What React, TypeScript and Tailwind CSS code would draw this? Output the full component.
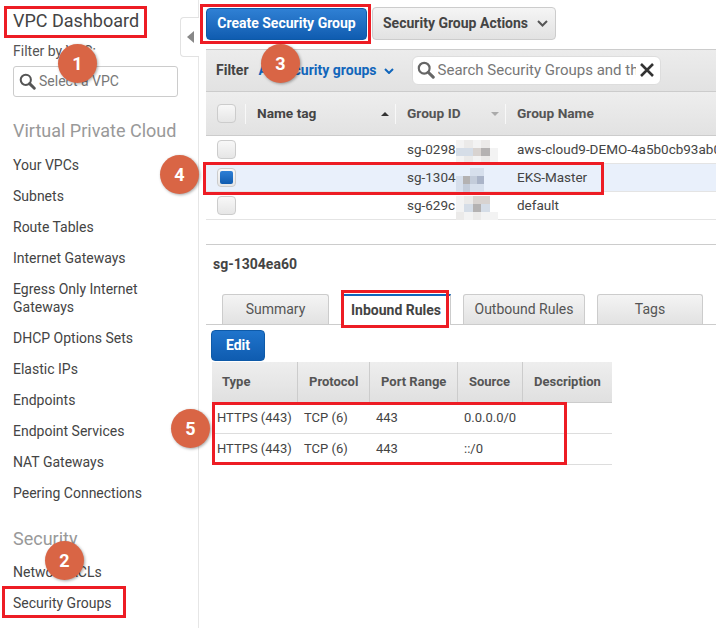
import React from "react";

const navA = ["Your VPCs", "Subnets", "Route Tables", "Internet Gateways"];
const navB = ["DHCP Options Sets", "Elastic IPs", "Endpoints", "Endpoint Services", "NAT Gateways", "Peering Connections"];

function Nav({ children, className = "" }: { children: React.ReactNode; className?: string }) {
  return <div className={"text-[14px] leading-[18px] text-[#444] mb-[13px] whitespace-nowrap " + className}>{children}</div>;
}

function Search({ size, color }: { size: number; color: string }) {
  return (
    <svg width={size} height={size} viewBox="0 0 20 20" fill="none" stroke={color} className="shrink-0">
      <circle cx="8" cy="8" r="6" strokeWidth="2.4" />
      <path d="M12.5 12.5L18 18" strokeWidth="3.4" strokeLinecap="round" />
    </svg>
  );
}

function Check({ checked = false }: { checked?: boolean }) {
  return (
    <div className="w-[19px] h-[19px] rounded-[4px] border border-[#ccc] bg-gradient-to-b from-[#f8f8f8] to-[#e6e6e6] flex items-center justify-center">
      {checked && <div className="w-[13px] h-[13px] rounded-[2px] bg-gradient-to-b from-[#2d7fd6] to-[#0f5cb0]" />}
    </div>
  );
}

function Badge({ n, className }: { n: number; className: string }) {
  return (
    <div className={"absolute w-[39px] h-[39px] rounded-full bg-[#d96545] text-white text-[18px] font-bold flex items-center justify-center shadow-[1px_1px_3px_rgba(0,0,0,0.35)] " + className}>
      {n}
    </div>
  );
}

function RedBox({ className }: { className: string }) {
  return <div className={"absolute border-[3px] border-[#ed1c24] pointer-events-none " + className} />;
}

function Mosaic({ className, cols, rows, cells }: { className: string; cols: number; rows: number; cells: string[] }) {
  return (
    <div
      className={"absolute grid " + className}
      style={{ gridTemplateColumns: `repeat(${cols}, 1fr)`, gridTemplateRows: `repeat(${rows}, 1fr)` }}
    >
      {cells.map((c, i) => (
        <div key={i} style={{ background: c }} />
      ))}
    </div>
  );
}

const W = "#ffffff";
const A = "#f3f3f3";
const B = "#ebeae9";
const C = "#d5dde7";
const D = "#d8d3d0";
const E = "#b4b2b2";
const F = "#c3ccda";
const G = "#aab4c8";
const H = "#d6dfec";
const I = "#e9f0fb";

const mosaics: Record<string, { cls: string; cols: number; rows: number; cells: string[] }> = {
  a: {
    cls: "left-[60px] top-[4px] w-[42px] h-[24px]",
    cols: 5,
    rows: 3,
    cells: [A, B, A, B, W, C, C, D, E, A, A, B, A, B, A],
  },
  b: {
    cls: "left-[60px] top-[4px] w-[28px] h-[24px]",
    cols: 4,
    rows: 3,
    cells: [I, I, H, H, H, E, F, G, H, F, H, H],
  },
  c: {
    cls: "left-[60px] top-[4px] w-[42px] h-[24px]",
    cols: 5,
    rows: 3,
    cells: [A, B, D, D, W, A, C, E, C, W, B, A, B, A, A],
  },
};

function SgRow({ selected, id, name, mosaic, checked }: { selected?: boolean; id: string; name: string; mosaic: string; checked?: boolean }) {
  const m = mosaics[mosaic];
  return (
    <div className={"grid grid-cols-[40px_150px_110px_1fr] h-[28px] items-center border-b border-[#e4e4e4] text-[13.5px] text-[#444] whitespace-nowrap " + (selected ? "bg-[#e9f0fb]" : "bg-white")}>
      <div className="pl-[11px]"><Check checked={checked} /></div>
      <div />
      <div className="pl-[11px] relative h-full flex items-center">
        {id}
        <Mosaic className={m.cls} cols={m.cols} rows={m.rows} cells={m.cells} />
      </div>
      <div className="pl-[11px] min-w-0 overflow-hidden">{name}</div>
    </div>
  );
}

function Th({ w, children }: { w: string; children: React.ReactNode }) {
  return <div className={"h-full flex items-center border-r border-[#ccc] last:border-r-0 " + w}>{children}</div>;
}

function RuleRow({ source }: { source: string }) {
  return (
    <div className="flex h-[31px] items-center border-b border-[#ddd] text-[13px] text-[#444] whitespace-nowrap">
      <div className="w-[86px] pl-[5px]">HTTPS (443)</div>
      <div className="w-[72px] pl-[6px]">TCP (6)</div>
      <div className="w-[88px] pl-[6px]">443</div>
      <div className="w-[65px] pl-[6px]">{source}</div>
      <div className="flex-1" />
    </div>
  );
}

function Tab({ w, active, children }: { w: string; active?: boolean; children: React.ReactNode }) {
  return active ? (
    <div className={"h-[31px] -mb-px flex items-center justify-center bg-white border-x border-[#ccc] border-t-2 border-t-[#1166bb] text-[14px] font-bold text-[#444] " + w}>{children}</div>
  ) : (
    <div className={"h-[30px] flex items-center justify-center rounded-t-[3px] border border-[#ccc] border-b-0 bg-gradient-to-b from-[#f4f4f4] to-[#e2e2e2] text-[14px] text-[#555] " + w}>{children}</div>
  );
}

export default function App() {
  return (
    <div className="relative w-[716px] h-[628px] overflow-hidden bg-white flex font-['Roboto',sans-serif]">
      <aside className="w-[199px] h-full shrink-0 border-r border-[#e6e6e6] pl-[13px] pr-[20px] pt-[9px] relative">
        <div className="text-[18px] leading-[24px] text-[#444]">VPC Dashboard</div>
        <div className="text-[14px] leading-[18px] text-[#555] mt-[9px]">Filter by VPC:</div>
        <div className="mt-[6px] h-[31px] w-[165px] rounded-[3px] border border-[#ccc] flex items-center pl-[5px] gap-[3px] text-[14px] text-[#777] whitespace-nowrap">
          <Search size={17} color="#555" />
          <span>Select a VPC</span>
        </div>
        <div className="text-[18px] leading-[24px] text-[#999] mt-[22px] mb-[13px] whitespace-nowrap">Virtual Private Cloud</div>
        {navA.map((t) => <Nav key={t}>{t}</Nav>)}
        <Nav>Egress Only Internet<br />Gateways</Nav>
        {navB.map((t) => <Nav key={t}>{t}</Nav>)}
        <div className="text-[18px] leading-[24px] text-[#999] mt-[25px] mb-[12px]">Security</div>
        <Nav>Network ACLs</Nav>
        <Nav>Security Groups</Nav>
        <div className="absolute left-[180px] top-[17px] w-[19px] h-[40px] bg-white border border-r-0 border-[#e2e2e2] rounded-l-[4px] flex items-center justify-center">
          <div className="w-0 h-0 border-y-[6px] border-y-transparent border-r-[7px] border-r-[#888]" />
        </div>
      </aside>

      <main className="flex-1 min-w-0 pl-[7px] pt-[7px]">
        <div className="flex items-center gap-[5px] h-[33px]">
          <div className="w-[161px] h-[32px] rounded-[4px] bg-gradient-to-b from-[#2f80d4] to-[#0f5cb0] border border-[#0e5aa8] text-white text-[14px] font-bold flex items-center justify-center whitespace-nowrap">Create Security Group</div>
          <div className="w-[184px] h-[33px] rounded-[4px] border border-[#ccc] bg-gradient-to-b from-[#f5f5f5] to-[#e2e2e2] text-[14px] font-bold text-[#444] flex items-center pl-[10px] gap-[9px] whitespace-nowrap">
            Security Group Actions
            <svg width="11" height="7" viewBox="0 0 11 7" fill="none" stroke="#555" strokeWidth="2"><path d="M1 1l4.5 4.5L10 1" /></svg>
          </div>
        </div>

        <div className="mt-[9px] h-[43px] bg-gradient-to-b from-[#ececec] to-[#e2e2e2] border-y border-[#ccc] flex items-center pl-[10px] text-[14px] font-bold whitespace-nowrap">
          <span className="text-[#444]">Filter</span>
          <span className="ml-[10px] text-[#1166bb] flex items-center gap-[7px]">
            All security groups
            <svg width="10" height="6" viewBox="0 0 10 6" fill="none" stroke="#1166bb" strokeWidth="2"><path d="M1 1l4 4 4-4" /></svg>
          </span>
          <div className="ml-[18px] -mt-px w-[249px] h-[29px] shrink-0 rounded-[6px] border border-[#ddd] bg-white flex items-center pl-[1px] font-normal text-[15px] text-[#777] overflow-hidden">
            <div className="w-[24px] flex justify-center"><Search size={18} color="#666" /></div>
            <span className="w-[198px] overflow-hidden">Search Security Groups and their</span>
            <svg className="ml-[4px] shrink-0" width="14" height="14" viewBox="0 0 14 14" stroke="#333" strokeWidth="2.6"><path d="M1 1l12 12M13 1L1 13" /></svg>
          </div>
        </div>

        <div className="grid grid-cols-[40px_150px_110px_1fr] h-[44px] items-center bg-gradient-to-b from-[#eeeeee] to-[#e2e2e2] border-b border-[#ccc] text-[13.7px] font-bold text-[#555] whitespace-nowrap">
          <div className="pl-[11px] h-[20px] flex items-center border-r border-[#f8f8f8]"><Check /></div>
          <div className="pl-[11px] pr-[4px] h-[20px] flex items-center justify-between border-r border-[#f8f8f8] text-[#444]">
            Name tag
            <div className="w-0 h-0 border-x-[4px] border-x-transparent border-b-[4px] border-b-[#333] mr-[2px]" />
          </div>
          <div className="pl-[11px] pr-[6px] h-[20px] flex items-center justify-between border-r border-[#f8f8f8]">
            Group ID
            <div className="w-0 h-0 border-x-[4px] border-x-transparent border-t-[4px] border-t-[#aaa]" />
          </div>
          <div className="pl-[11px]">Group Name</div>
        </div>

        <SgRow id="sg-0298" name="aws-cloud9-DEMO-4a5b0cb93ab0" mosaic="a" />
        <SgRow id="sg-1304" name="EKS-Master" mosaic="b" selected checked />
        <SgRow id="sg-629c" name="default" mosaic="c" />

        <div className="mt-[24px] border-t border-[#ccc] h-[1px]" />
        <div className="mt-[11px] pl-[7px] text-[14px] leading-[16px] font-bold text-[#444]">sg-1304ea60</div>

        <div className="mt-[22px] pl-[16px] flex items-end gap-[12px] border-b border-[#ccc] h-[31px]">
          <Tab w="w-[107px]">Summary</Tab>
          <Tab w="w-[110px]" active>Inbound Rules</Tab>
          <Tab w="w-[122px]">Outbound Rules</Tab>
          <Tab w="w-[106px]">Tags</Tab>
        </div>

        <div className="mt-[5px] ml-[5px] w-[54px] h-[31px] rounded-[4px] bg-gradient-to-b from-[#1f74cc] to-[#0f5cb0] border border-[#0e5aa8] text-white text-[14px] font-bold flex items-center justify-center">Edit</div>

        <div className="ml-[6px] mt-[1px] w-[400px]">
          <div className="flex h-[41px] items-center bg-gradient-to-b from-[#eeeeee] to-[#e0e0e0] border-b border-[#ccc] text-[13px] font-bold text-[#555] whitespace-nowrap">
            <Th w="w-[86px] pl-[10px]">Type</Th>
            <Th w="w-[72px] pl-[11px]">Protocol</Th>
            <Th w="w-[88px] pl-[11px]">Port Range</Th>
            <Th w="w-[65px] pl-[11px]">Source</Th>
            <Th w="w-[89px] pl-[11px]">Description</Th>
          </div>
          <RuleRow source="0.0.0.0/0" />
          <RuleRow source="::/0" />
        </div>
      </main>

      <RedBox className="left-[4px] top-[6px] w-[143px] h-[32px]" />
      <RedBox className="left-[2px] top-[586px] w-[124px] h-[32px]" />
      <RedBox className="left-[200px] top-[4px] w-[171px] h-[40px]" />
      <RedBox className="left-[203px] top-[162px] w-[401px] h-[33px]" />
      <RedBox className="left-[341px] top-[290px] w-[108px] h-[38px]" />
      <RedBox className="left-[212px] top-[402px] w-[355px] h-[63px]" />

      <Badge n={1} className="left-[58px] top-[44px]" />
      <Badge n={2} className="left-[45px] top-[541px]" />
      <Badge n={3} className="left-[261px] top-[44px]" />
      <Badge n={4} className="left-[160px] top-[155px]" />
      <Badge n={5} className="left-[171px] top-[409px]" />
    </div>
  );
}
